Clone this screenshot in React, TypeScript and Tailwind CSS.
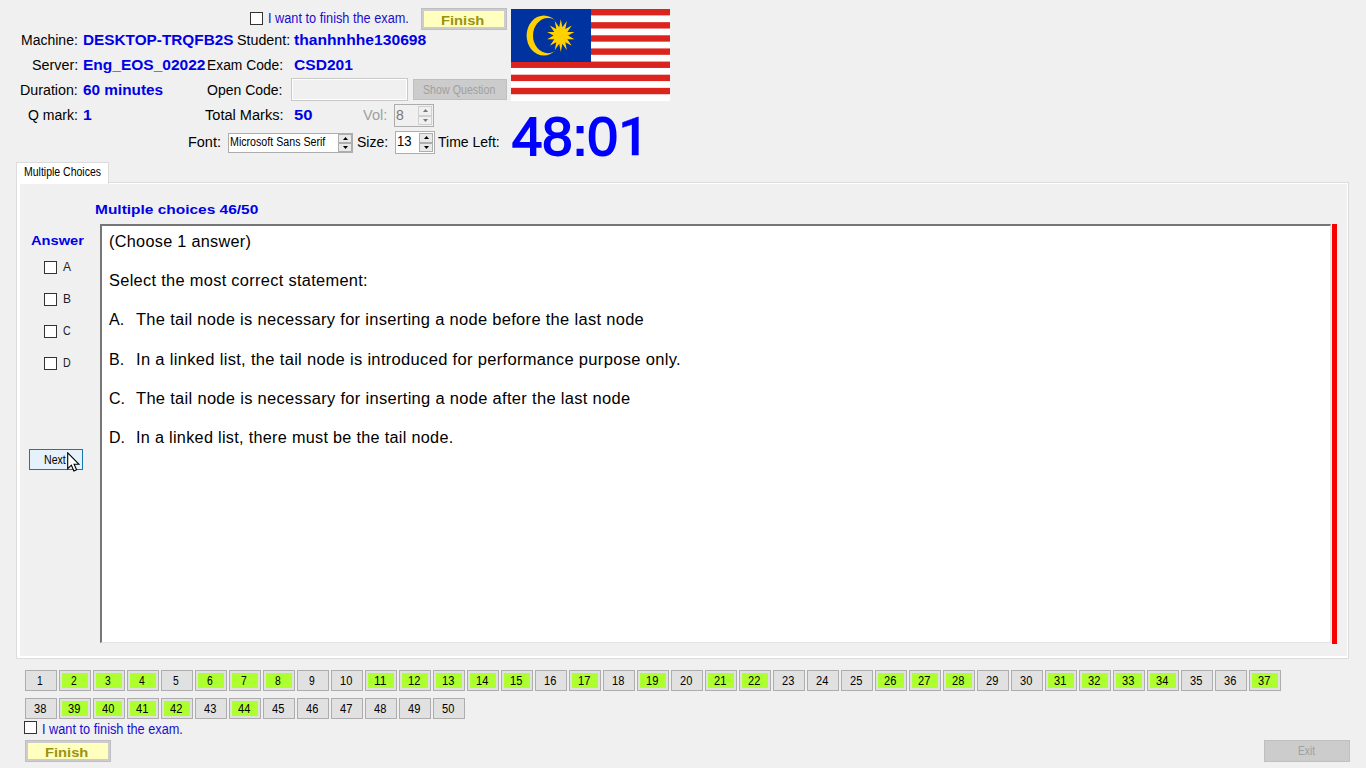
import { useLayoutEffect, useRef, useState, type ReactNode } from "react";

/* Text set to an exact width, so columns keep their measure whatever the font renders. */
function Fit({ w, className = "", children }: { w: number; className?: string; children: ReactNode }) {
  const ref = useRef<HTMLSpanElement>(null);
  const [scale, setScale] = useState(1);
  useLayoutEffect(() => {
    const natural = ref.current?.offsetWidth ?? 0;
    if (natural > 0) setScale(w / natural);
  }, [w, children]);
  return (
    <span className={`inline-flex shrink-0 whitespace-pre ${className}`} style={{ width: w }}>
      <span ref={ref} className="inline-block shrink-0 origin-left" style={{ transform: `scaleX(${scale})` }}>
        {children}
      </span>
    </span>
  );
}

function Box() {
  return <span className="size-[13px] shrink-0 border border-[#333] bg-white" />;
}

function Finish() {
  return (
    <button className="flex h-[22px] w-[86px] shrink-0 border border-[#bfbfbf] bg-[#ccc] p-[2px] text-[13px] font-bold text-[#99930f]">
      <span className="flex h-full w-full items-center justify-center bg-[#ffffc0] pr-1 pt-0.5 leading-none">
        <Fit w={43}>Finish</Fit>
      </span>
    </button>
  );
}

function Arrows({ disabled = false }: { disabled?: boolean }) {
  const fill = disabled ? "#777" : "#000";
  const cell = disabled
    ? "flex w-[14px] flex-1 items-center justify-center border border-[#d0d0d0] bg-[#f0f0f0]"
    : "flex w-[14px] flex-1 items-center justify-center border border-[#adadad] bg-[#e9e9e9]";
  return (
    <span className="flex h-full shrink-0 flex-col">
      <span className={cell}>
        <svg width="5" height="3" viewBox="0 0 5 3"><path d="M0 3 2.5 0 5 3Z" fill={fill} /></svg>
      </span>
      <span className={cell}>
        <svg width="5" height="3" viewBox="0 0 5 3"><path d="M0 0 2.5 3 5 0Z" fill={fill} /></svg>
      </span>
    </span>
  );
}

function Flag() {
  const points = Array.from({ length: 28 }, (_, i) => {
    const a = (i * Math.PI) / 14;
    const r = i % 2 ? 0.52 : 1;
    return `${(49.8 + 14 * r * Math.sin(a)).toFixed(2)},${(26.6 - 16.3 * r * Math.cos(a)).toFixed(2)}`;
  }).join(" ");
  return (
    <svg width="159" height="92" viewBox="0 0 159 92" className="block shrink-0">
      <rect width="159" height="92" fill="#fff" />
      {[0, 1, 2, 3, 4, 5, 6].map((i) => (
        <rect key={i} y={i * 13.14} width="159" height="6.4" fill="#dc241f" />
      ))}
      <rect width="80" height="53" fill="#0032a0" />
      <ellipse cx="32.8" cy="26.6" rx="17.2" ry="20" fill="#ffd100" />
      <ellipse cx="37" cy="26.6" rx="15" ry="17.6" fill="#0032a0" />
      <polygon points={points} fill="#ffd100" />
    </svg>
  );
}

const answered = new Set([2, 3, 4, 6, 7, 8, 11, 12, 13, 14, 15, 17, 19, 21, 22, 26, 27, 28, 31, 32, 33, 34, 37, 39, 40, 41, 42, 44]);

const lines: [string, string, number][] = [
  ["", "(Choose 1 answer)", 142],
  ["", "Select the most correct statement:", 259],
  ["A.", "The tail node is necessary for inserting a node before the last node", 508.5],
  ["B.", "In a linked list, the tail node is introduced for performance purpose only.", 544.5],
  ["C.", "The tail node is necessary for inserting a node after the last node", 494.5],
  ["D.", "In a linked list, there must be the tail node.", 318],
];

const row = "flex h-[25px] items-center";
const label = "pb-0.5";
const value = "pb-0.5 text-sm leading-none font-bold text-[#0000e6]";

function Header() {
  return (
    <header className="flex h-[162px] pt-2">
      <div className="w-[511px] shrink-0 text-sm leading-none text-black">
        <div className="flex h-5 items-start pl-[250px]">
          <span className="mt-1"><span className="flex"><Box /></span></span>
          <Fit w={141} className="ml-[5px] mt-[3px] text-[#1a0dd0]">I want to finish the exam.</Fit>
          <span className="ml-3"><Finish /></span>
        </div>
        <div className={row}>
          <Fit w={57} className={`ml-[21px] ${label}`}>Machine:</Fit>
          <Fit w={150} className={`ml-[5px] ${value}`}>DESKTOP-TRQFB2S</Fit>
          <Fit w={53} className={`ml-1 ${label}`}>Student:</Fit>
          <Fit w={132} className={`ml-1 ${value}`}>thanhnhhe130698</Fit>
        </div>
        <div className={row}>
          <Fit w={46} className={`ml-8 ${label}`}>Server:</Fit>
          <Fit w={123} className={`ml-[5px] ${value}`}>Eng_EOS_02022</Fit>
          <Fit w={76} className={`ml-px ${label}`}>Exam Code:</Fit>
          <Fit w={59} className={`ml-[11px] ${value}`}>CSD201</Fit>
        </div>
        <div className={row}>
          <Fit w={58} className={`ml-5 ${label}`}>Duration:</Fit>
          <Fit w={80} className={`ml-[5px] ${value}`}>60 minutes</Fit>
          <Fit w={76} className={`ml-11 ${label}`}>Open Code:</Fit>
          <span className="-mt-0.5 ml-2 h-[23px] w-[117px] border-2 border-white bg-[#f0f0f0] outline-1 -outline-offset-1 outline-[#c8c8c8]" />
          <span className="-mt-0.5 ml-[5px] flex h-[21px] w-[94px] items-center justify-center border border-[#bfbfbf] bg-[#ccc] pr-0.5 text-xs text-[#a0a0a0]">
            <Fit w={72}>Show Question</Fit>
          </span>
        </div>
        <div className={row}>
          <Fit w={50} className={`ml-7 ${label}`}>Q mark:</Fit>
          <Fit w={9} className={`ml-[5px] ${value}`}>1</Fit>
          <Fit w={78} className={`ml-[113px] ${label}`}>Total Marks:</Fit>
          <Fit w={19} className={`ml-[11px] ${value}`}>50</Fit>
          <Fit w={24} className={`ml-[50px] text-[#a0a0a0] ${label}`}>Vol:</Fit>
          <span className="ml-[7px] flex h-[23px] w-10 items-center justify-between border border-[#adadad] p-px pl-px text-[#777]">
            <Fit w={8} className={label}>8</Fit>
            <Arrows disabled />
          </span>
        </div>
        <div className="flex h-7 items-center">
          <Fit w={33} className="ml-[188px]">Font:</Fit>
          <span className="ml-[7px] mt-px flex h-5 w-[125px] items-center justify-between border border-[#adadad] bg-white pl-px text-xs leading-none">
            <Fit w={95} className="pb-0.5">Microsoft Sans Serif</Fit>
            <Arrows />
          </span>
          <Fit w={31} className="ml-1">Size:</Fit>
          <span className="ml-[7px] mt-px flex h-[23px] w-10 items-center justify-between border border-[#adadad] bg-white p-px">
            <Fit w={15} className="pb-[3px]">13</Fit>
            <Arrows />
          </span>
          <Fit w={62} className="ml-[3px]">Time Left:</Fit>
        </div>
      </div>
      <div className="flex flex-col pt-px">
        <Flag />
        <div className="mt-[7px] pl-px text-[54px] leading-[56px] text-[#0000ff] [-webkit-text-stroke:1.8px_#0000ff]">
          <Fit w={137}>48:0<span className="font-['Roboto','Liberation_Sans',sans-serif] font-medium [-webkit-text-stroke:0.4px_#0000ff]">1</span></Fit>
        </div>
      </div>
    </header>
  );
}

function Question() {
  return (
    <div className="ml-4 w-[1333px]">
      <div className="relative z-10 flex h-[22px] w-[93px] -mb-0.5 border border-b-0 border-[#dcdcdc] bg-white pl-[7px] pt-0.5 text-xs leading-[14px] text-black">
        <Fit w={77}>Multiple Choices</Fit>
      </div>
      <div className="h-[477px] border border-[#dcdcdc] bg-white pb-[2px] pl-[3px] pr-px pt-px">
        <div className="h-full bg-[#f0f0f0]">
          <div className="h-10 pl-[75px] pt-[18px] text-[13px] font-bold leading-4 text-[#0000e6]">
            <Fit w={163}>Multiple choices 46/50</Fit>
          </div>
          <div className="flex">
            <div className="flex w-20 shrink-0 flex-col">
              <Fit w={53} className="ml-[11px] mt-[9px] text-[13px] font-bold leading-4 text-[#0000e6]">Answer</Fit>
              <div className="ml-6 mt-3 flex flex-col gap-[19px]">
                {["A", "B", "C", "D"].map((c) => (
                  <label key={c} className="flex h-[13px] items-center text-xs leading-none text-[#222]">
                    <Box />
                    <Fit w={8} className="ml-1.5 pb-0.5">{c}</Fit>
                  </label>
                ))}
              </div>
              <button className="relative ml-[9px] mt-[79px] flex h-[21px] w-[54px] items-center border border-[#1877b0] bg-[#e5f1fb] pl-3.5 text-xs leading-none text-black">
                <Fit w={22}>Next</Fit>
                <svg className="absolute left-[37px] top-[2px]" width="13" height="20" viewBox="0 0 13 20">
                  <path d="M.7.8v15.9l3.7-3.5 2.5 5.7 2.7-1.2-2.5-5.4h5Z" fill="#fff" stroke="#000" strokeWidth="1.1" />
                </svg>
              </button>
            </div>
            <div className="h-[419px] w-[1231px] shrink-0 border-b border-l-2 border-r border-t-2 border-b-[#e3e3e3] border-l-[#767676] border-r-[#e3e3e3] border-t-[#767676] bg-white pl-[7px] pt-[6px] text-base text-black">
              {lines.map(([letter, text, w]) => (
                <div key={text} className="flex h-[39.2px] items-start leading-[20px]">
                  {letter && <span className="w-[27px] shrink-0">{letter}</span>}
                  <Fit w={w} className="tracking-[0.3px]">{text}</Fit>
                </div>
              ))}
            </div>
            <div className="ml-px h-[420px] w-[5px] bg-[#f80000]" />
          </div>
        </div>
      </div>
    </div>
  );
}

export default function App() {
  return (
    <div className="h-[768px] w-[1366px] overflow-hidden bg-[#f0f0f0] font-['Liberation_Sans',Arial,sans-serif]">
      <Header />
      <Question />
      <div className="ml-[25px] mt-[11px] grid w-[1256px] grid-cols-[repeat(37,32px)] gap-x-0.5 gap-y-[7px]">
        {Array.from({ length: 50 }, (_, i) => i + 1).map((n) => (
          <button key={n} className="flex h-[21px] border border-[#adadad] bg-[#e1e1e1] p-[2px] text-xs leading-none text-black">
            <span className={answered.has(n) ? "flex h-full w-full items-center justify-center bg-[#adff2f] pr-0.5" : "flex h-full w-full items-center justify-center pr-0.5"}>
              <Fit w={n < 10 ? 6 : 12}>{n}</Fit>
            </span>
          </button>
        ))}
      </div>
      <div className="ml-6 mt-0.5 flex h-[19px] items-start text-sm leading-none text-[#1a0dd0]">
        <Box />
        <Fit w={141} className="ml-[5px] mt-px">I want to finish the exam.</Fit>
      </div>
      <footer className="ml-[25px] flex w-[1325px] justify-between">
        <Finish />
        <button className="flex h-[22px] w-[86px] items-center justify-center border border-[#bfbfbf] bg-[#ccc] pr-0.5 text-xs leading-none text-[#a0a0a0]">
          <Fit w={17}>Exit</Fit>
        </button>
      </footer>
    </div>
  );
}
